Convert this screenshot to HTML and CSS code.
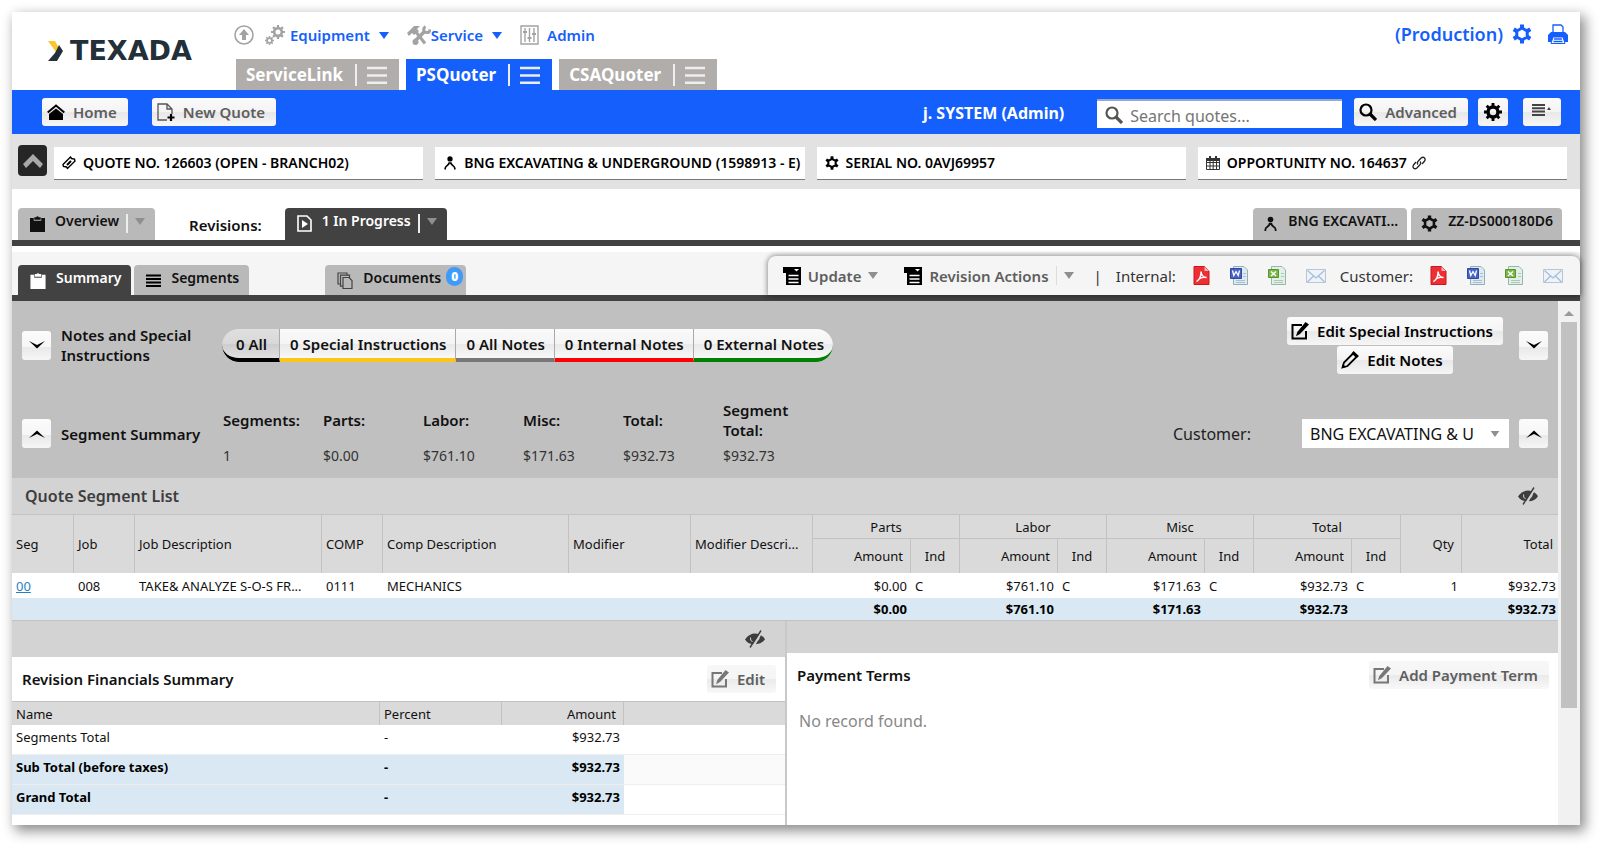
FILE: index.html
```
<!DOCTYPE html>
<html lang="en">
<head>
    <meta charset="UTF-8">
    <meta name="viewport" content="width=device-width, initial-scale=1.0">
    <title>Texada - PSQuoter</title>
    <link rel="stylesheet" href="styles.css">
</head>
<body>
    <!-- shared icons -->
    <svg class="sprite" aria-hidden="true">
        <symbol id="gear" viewBox="0 0 20 20"><path fill="none" stroke="currentColor" stroke-width="3" stroke-linejoin="round" d="M10 4l5.200 3v6L10 16l-5.200-3V7z"/><path stroke="currentColor" stroke-width="4" d="M10 .5v4M10 15.500v4M1.700 5.200l3.300 2M15 12.800l3.300 2M1.700 14.800l3.300-2M15 7.200l3.300-2"/></symbol>
        <symbol id="cog" viewBox="0 0 20 20"><circle cx="10" cy="10" r="5.500" fill="none" stroke="currentColor" stroke-width="3.800"/><path stroke="currentColor" stroke-width="3.200" d="M10 0v4M10 16v4M0 10h4M16 10h4M3 3l3 3M14 14l3 3M3 17l3-3M14 6l3-3"/></symbol>
        <symbol id="person" viewBox="0 0 16 16"><circle cx="8" cy="3.300" r="3" fill="currentColor"/><path d="M2.500 15.500V14C2.500 11 6.500 11 7 8h2c.5 3 4.500 3 4.500 6v1.500" fill="none" stroke="currentColor" stroke-width="1.900"/></symbol>
        <symbol id="clip" viewBox="0 0 16 18"><path fill="currentColor" d="M0 3h4v3h8V3h4v15H0z"/><path fill="currentColor" d="M4.600 2.200h2a1.500 1.500 0 0 1 2.800 0h2v2.800H4.600z"/></symbol>
        <symbol id="bars" viewBox="0 0 20 18"><path stroke="currentColor" stroke-width="2.600" d="M0 2h20M0 9.500h20M0 16.700h20"/></symbol>
        <symbol id="caret" viewBox="0 0 10 7"><path fill="currentColor" d="M0 0h10L5 7z"/></symbol>
        <symbol id="down" viewBox="0 0 16 10"><path fill="currentColor" d="M0 1l8 4 8-4-8 7.500z"/></symbol>
        <symbol id="up" viewBox="0 0 16 10"><path fill="currentColor" d="M0 9l8-4 8 4-8-7.500z"/></symbol>
        <symbol id="lens" viewBox="0 0 18 18"><circle cx="7" cy="7" r="5.500" fill="none" stroke="currentColor" stroke-width="2.200"/><path d="M11 11l6 6" stroke="currentColor" stroke-width="3.200"/></symbol>
        <symbol id="edit" viewBox="0 0 18 18"><path d="M11 3H1.500v13.500H15V9" fill="none" stroke="currentColor" stroke-width="2"/><path fill="currentColor" d="M14.500 0L18 2.500 9 12l-4 2.200L6.300 10z"/></symbol>
        <symbol id="list" viewBox="0 0 18 18"><path fill="currentColor" d="M0 0h18v18H3V6H0z"/><path stroke="#fff" stroke-width="1.600" d="M5.500 8.500h10M5.500 12h10M5.500 15.500h10"/><path fill="#fff" d="M11 2h5l-2.500 2.500z"/></symbol>
        <symbol id="eye" viewBox="0 0 20 18"><path fill="currentColor" d="M0 9.500C4 3.500 10 2.500 14 4.500L8 14C4.500 14 2 12.500 0 9.500zM16 5.200c1.700 1 3 2.300 4 4-2 3.300-5.500 4.900-9.200 5z"/><path stroke="#d3d3d3" d="M5.500 7.500a4.500 4.500 0 0 0 2 4.500M13 10.500a4 4 0 0 0 1-3" fill="none"/><path stroke="currentColor" stroke-width="1.400" d="M16 .5L5 17.500"/></symbol>
        <symbol id="pdf" viewBox="0 0 17 19"><path fill="#ee2e33" stroke="#c9181e" d="M1 .5h10.500L16 5v13.500H1z"/><path fill="#f9b3b3" d="M11.500.5V5H16z"/><path fill="none" stroke="#fff" stroke-width="1.500" d="M3.500 15.500c3-1.500 5-6 4.500-10 .5 4 2.500 6 5.500 6-3-.6-6.500.4-8.500 2.200"/></symbol>
        <symbol id="word" viewBox="0 0 18 19"><path fill="#dfeaf0" stroke="#8fb0bb" d="M3.500.500H14L17.500 4v14.500h-14z"/><path stroke="#a9c1ca" d="M6 14.500h9M6 16.500h9M13 7.500h3M13 10.500h3"/><path fill="#4762c4" stroke="#3049a5" d="M.5 2.500h11v10H.5z"/><path fill="none" stroke="#fff" stroke-width="1.300" d="M2.500 4.500l1.300 5L6 5.500l2.200 4 1.300-5"/></symbol>
        <symbol id="xls" viewBox="0 0 18 19"><path fill="#e4efe6" stroke="#8fb9a8" d="M3.500.500H14L17.500 4v14.500h-14z"/><path stroke="#a9cab8" d="M6 14.500h9M6 16.500h9M13 7.500h3M13 10.500h3"/><path fill="#7ab648" stroke="#57952b" d="M.5 3.500h10v8H.5z"/><path stroke="#fff" stroke-width="1.400" d="M3 5.500l5 4.500M8 5.500L3 10"/></symbol>
        <symbol id="mail" viewBox="0 0 20 14"><path fill="#edf3fa" stroke="#bcc4ce" d="M.5.500h19v13H.5z"/><path fill="none" stroke="#a9bdd6" stroke-width="1.300" d="M1.500 1.500L10 9l8.500-7.500M1.500 13l6-6M18.500 13l-6-6"/></symbol>
    </svg>

    <div class="app">
        <header class="header">
            <div class="logo">
                <svg width="15" height="20" viewBox="0 0 15 20"><path fill="#fdc52c" d="M0 0h7l4 7-3 4z"/><path fill="#232f39" d="M11 4l4 6-6 10H0l7-8z"/></svg>
                <span>TEXADA</span>
            </div>
            <div class="header-main">
                <nav class="menu">
                    <svg class="gray" width="20" height="20" viewBox="0 0 20 20"><circle cx="10" cy="10" r="9" fill="none" stroke="currentColor" stroke-width="1.600"/><path fill="currentColor" d="M10 4l5 6h-3v5H8v-5H5z"/></svg>
                    <svg class="gray gears" width="20" height="20" viewBox="0 0 20 20"><use href="#cog" x="6" y="0" width="14" height="14"/><use href="#cog" x="0" y="11" width="9" height="9"/></svg>
                    <a href="#">Equipment</a>
                    <svg class="caret" width="10" height="7"><use href="#caret"/></svg>
                    <svg class="gray tools" width="24" height="20" viewBox="0 0 24 20"><path fill="currentColor" d="M0 8l7-7h6l-3 3 2 2-5 4-2-2-3 3z"/><path stroke="currentColor" stroke-width="3" d="M9 7l9 11.500"/><path stroke="currentColor" stroke-width="3.600" d="M17 7L7 17"/><circle cx="8.500" cy="17" r="3" fill="currentColor"/><path fill="none" stroke="currentColor" stroke-width="3" d="M18.500 1.500c-3 2-2 6 1 6 2 .3 3.200-.5 3.500-3"/></svg>
                    <a href="#">Service</a>
                    <svg class="caret" width="10" height="7"><use href="#caret"/></svg>
                    <svg class="gray sliders" width="19" height="20" viewBox="0 0 19 20"><path fill="none" stroke="currentColor" stroke-width="1.400" d="M1 1h17v18H1zM5 3v14M9.500 3v14M14 3v14"/><path stroke="currentColor" stroke-width="2" d="M3 7h4M7.500 13h4M12 9h4"/></svg>
                    <a href="#">Admin</a>
                </nav>
                <div class="app-tabs">
                    <a class="app-tab" href="#">ServiceLink <i></i><svg width="20" height="18"><use href="#bars"/></svg></a>
                    <a class="app-tab active" href="#">PSQuoter <i></i><svg width="20" height="18"><use href="#bars"/></svg></a>
                    <a class="app-tab" href="#">CSAQuoter <i></i><svg width="20" height="18"><use href="#bars"/></svg></a>
                </div>
            </div>
            <div class="env">
                <span>(Production)</span>
                <svg width="20" height="20"><use href="#gear"/></svg>
                <svg class="printer" width="20" height="20" viewBox="0 0 20 20"><path fill="#fff" stroke="currentColor" stroke-width="1.300" d="M5 9V1h8l2 2v6z"/><path fill="currentColor" d="M3 8h14l3 3v7H0v-7z"/><path fill="#fff" stroke="currentColor" d="M5 13h10l2 6.500H3z"/><path stroke="currentColor" stroke-width="1.300" d="M6 15h8M5.500 17.500h9"/></svg>
            </div>
        </header>

        <div class="bluebar">
            <button class="btn"><svg width="18" height="16" viewBox="0 0 18 16"><path fill="#000" d="M9 4.500l7 5.500v6H2v-6z"/><path fill="none" stroke="#000" stroke-width="2" d="M.7 8.500L9 1.500l8.300 7"/></svg>Home</button>
            <button class="btn new-quote"><svg width="18" height="19" viewBox="0 0 18 19"><path fill="none" stroke="#555" stroke-width="1.300" d="M15 11V6l-5-5H1v16h9M10 1v5h5"/><path stroke="#000" stroke-width="2.200" d="M14 11v7M10.500 14.500h7"/></svg>New Quote</button>
            <span class="user">j. SYSTEM (Admin)</span>
            <div class="search">
                <svg width="18" height="18"><use href="#lens"/></svg>
                <input type="text" placeholder="Search quotes..." aria-label="Search quotes">
            </div>
            <button class="btn advanced"><svg width="18" height="18"><use href="#lens"/></svg>Advanced</button>
            <button class="btn icon-btn" aria-label="Settings"><svg width="18" height="18"><use href="#cog"/></svg></button>
            <button class="btn menu-btn" aria-label="Menu"><svg width="20" height="12" viewBox="0 0 20 12"><path stroke="#444" stroke-width="2" d="M0 1h13M0 4.300h13M0 7.600h13M0 11h13"/><path fill="#444" d="M15 6h4l-2-3z"/></svg></button>
        </div>

        <div class="infobar">
            <button class="collapse" aria-label="Collapse"><svg width="20" height="14" viewBox="0 0 20 14"><path fill="#a9a9a9" d="M10 0l10 10-3 4-7-7-7 7-3-4z"/></svg></button>
            <div class="info"><svg width="14" height="14" viewBox="0 0 14 14"><path fill="none" stroke="#000" stroke-width="1.400" d="M1 8.500L8.500 1l1 1.500 3 .5.500 2L5.500 12.500l-1-1.500-3-.5z"/><path stroke="#000" stroke-width="2" d="M5 9l4-4"/></svg>QUOTE NO. 126603 (OPEN - BRANCH02)</div>
            <div class="info"><svg width="14" height="14"><use href="#person"/></svg>BNG EXCAVATING &amp; UNDERGROUND (1598913 - E)</div>
            <div class="info"><svg width="14" height="14"><use href="#gear"/></svg>SERIAL NO. 0AVJ69957</div>
            <div class="info"><svg width="14" height="14" viewBox="0 0 14 14"><path stroke="#333" fill="none" d="M.5 2.500h13v11H.5zM.5 6.500h13M.5 10h13M4 5v8.500M7.200 5v8.500M10.500 5v8.500"/><path fill="#333" d="M0 2h14v3H0zM3 0h2v2H3zM9 0h2v2H9z"/></svg>OPPORTUNITY NO. 164637<svg class="link" width="14" height="14" viewBox="0 0 14 14"><path fill="none" stroke="#222" stroke-width="1.300" d="M6 8.500C5 7.500 5.200 6 6.300 5l2.800-3c2.500-2 5 .5 3.500 3L10 8M8 5.500c1 1 .8 2.500-.3 3.500l-2.800 3C2.400 14 0 11.500 1.500 9L4 6"/></svg></div>
        </div>

        <div class="tabbar">
            <a class="tab overview" href="#"><svg width="15" height="17"><use href="#clip"/></svg>Overview<i></i><svg class="drop" width="10" height="7"><use href="#caret"/></svg></a>
            <span class="revisions">Revisions:</span>
            <a class="tab active" href="#"><svg width="15" height="17" viewBox="0 0 15 17"><path fill="none" stroke="#fff" stroke-width="1.600" d="M1 1h9l4 4v11H1z"/><path fill="#fff" d="M5 5v8l6-4z"/></svg>1 In Progress<i></i><svg class="drop" width="10" height="7"><use href="#caret"/></svg></a>
            <div class="right-tabs">
                <a class="tab" href="#"><svg width="15" height="16"><use href="#person"/></svg>BNG EXCAVATI...</a>
                <a class="tab" href="#"><svg width="17" height="17"><use href="#gear"/></svg>ZZ-DS000180D6</a>
            </div>
        </div>

        <div class="tabbar sub">
            <a class="tab active" href="#"><svg width="16" height="17"><use href="#clip"/></svg>Summary</a>
            <a class="tab segments" href="#"><svg width="15" height="13" viewBox="0 0 15 13"><path stroke="#000" stroke-width="2.200" d="M0 1.500h15M0 5h15M0 8.500h15M0 12h15"/></svg>Segments</a>
            <a class="tab documents" href="#"><svg width="16" height="17" viewBox="0 0 16 17"><g fill="#b9b9b9" stroke="#444" stroke-width="1.200"><path d="M1 1h9v11H1z"/><path d="M3.500 3.200h9v11h-9z"/><path d="M6 5.500h6l3 3v8H6z"/></g></svg>Documents<b class="badge">0</b></a>
            <div class="toolbar">
                <button class="tool"><svg width="18" height="18"><use href="#list"/></svg>Update<svg class="drop" width="10" height="7"><use href="#caret"/></svg></button>
                <button class="tool wide"><svg width="18" height="18"><use href="#list"/></svg>Revision Actions<i></i><svg class="drop" width="10" height="7"><use href="#caret"/></svg></button>
                <span class="bar">|</span>
                <div class="exports">
                    <span>Internal:</span>
                    <button aria-label="PDF"><svg width="17" height="19"><use href="#pdf"/></svg></button>
                    <button aria-label="Word"><svg width="18" height="19"><use href="#word"/></svg></button>
                    <button aria-label="Excel"><svg width="18" height="19"><use href="#xls"/></svg></button>
                    <button aria-label="Mail"><svg width="20" height="14"><use href="#mail"/></svg></button>
                </div>
                <div class="exports">
                    <span>Customer:</span>
                    <button aria-label="PDF"><svg width="17" height="19"><use href="#pdf"/></svg></button>
                    <button aria-label="Word"><svg width="18" height="19"><use href="#word"/></svg></button>
                    <button aria-label="Excel"><svg width="18" height="19"><use href="#xls"/></svg></button>
                    <button aria-label="Mail"><svg width="20" height="14"><use href="#mail"/></svg></button>
                </div>
            </div>
        </div>

        <div class="body">
            <main class="content">
                <section class="row notes">
                    <button class="toggle" aria-label="Expand"><svg width="16" height="10"><use href="#down"/></svg></button>
                    <h2>Notes and Special Instructions</h2>
                    <div class="pills">
                        <button class="pill all">0 All</button>
                        <button class="pill special">0 Special Instructions</button>
                        <button class="pill allnotes">0 All Notes</button>
                        <button class="pill internal">0 Internal Notes</button>
                        <button class="pill external">0 External Notes</button>
                    </div>
                    <div class="edit-buttons">
                        <button class="btn dark"><svg width="18" height="18"><use href="#edit"/></svg>Edit Special Instructions</button>
                        <button class="btn dark"><svg width="18" height="18" viewBox="0 0 18 18"><path fill="none" stroke="#000" stroke-width="1.800" d="M1.500 16.500l1.500-5L12.500 2l3.500 3.500L6.500 15z"/><path fill="#000" d="M12.500 0L18 5l-2.500 2-5-4.500zM1 17l1-4 3 3z"/></svg>Edit Notes</button>
                    </div>
                    <button class="toggle" aria-label="Expand"><svg width="16" height="10"><use href="#down"/></svg></button>
                </section>

                <section class="row summary">
                    <button class="toggle" aria-label="Collapse"><svg width="16" height="10"><use href="#up"/></svg></button>
                    <h2>Segment Summary</h2>
                    <dl class="totals">
                        <div><dt>Segments:</dt><dd>1</dd></div>
                        <div><dt>Parts:</dt><dd>$0.00</dd></div>
                        <div><dt>Labor:</dt><dd>$761.10</dd></div>
                        <div><dt>Misc:</dt><dd>$171.63</dd></div>
                        <div><dt>Total:</dt><dd>$932.73</dd></div>
                        <div><dt>Segment Total:</dt><dd>$932.73</dd></div>
                    </dl>
                    <label class="customer-label" for="customer">Customer:</label>
                    <div class="select">
                        <select id="customer"><option>BNG EXCAVATING &amp; U</option></select>
                        <svg class="drop" width="10" height="6"><use href="#caret"/></svg>
                    </div>
                    <button class="toggle" aria-label="Collapse"><svg width="16" height="10"><use href="#up"/></svg></button>
                </section>

                <div class="list-title"><h2>Quote Segment List</h2><svg width="20" height="18"><use href="#eye"/></svg></div>
                <table class="grid">
                    <colgroup>
                        <col class="w62"><col class="w61"><col><col class="w61"><col class="w186"><col class="w122"><col class="w122">
                        <col class="w98"><col class="w49"><col class="w98"><col class="w49"><col class="w98"><col class="w49"><col class="w98"><col class="w49">
                        <col class="w61"><col class="w96">
                    </colgroup>
                    <thead>
                        <tr>
                            <th rowspan="2">Seg</th><th rowspan="2">Job</th><th rowspan="2">Job Description</th><th rowspan="2">COMP</th><th rowspan="2">Comp Description</th><th rowspan="2">Modifier</th><th rowspan="2">Modifier Descri...</th>
                            <th class="group" colspan="2">Parts</th><th class="group" colspan="2">Labor</th><th class="group" colspan="2">Misc</th><th class="group" colspan="2">Total</th>
                            <th class="num" rowspan="2">Qty</th><th class="num last" rowspan="2">Total</th>
                        </tr>
                        <tr>
                            <th class="num">Amount</th><th class="ind">Ind</th><th class="num">Amount</th><th class="ind">Ind</th><th class="num">Amount</th><th class="ind">Ind</th><th class="num">Amount</th><th class="ind">Ind</th>
                        </tr>
                    </thead>
                    <tbody>
                        <tr>
                            <td><a href="#">00</a></td><td>008</td><td>TAKE&amp; ANALYZE S-O-S FR...</td><td>0111</td><td>MECHANICS</td><td></td><td></td>
                            <td class="num">$0.00</td><td>C</td><td class="num">$761.10</td><td>C</td><td class="num">$171.63</td><td>C</td><td class="num">$932.73</td><td>C</td>
                            <td class="num">1</td><td class="num last">$932.73</td>
                        </tr>
                    </tbody>
                    <tfoot>
                        <tr>
                            <td colspan="7"></td>
                            <td class="num">$0.00</td><td></td><td class="num">$761.10</td><td></td><td class="num">$171.63</td><td></td><td class="num">$932.73</td><td></td>
                            <td></td><td class="num last">$932.73</td>
                        </tr>
                    </tfoot>
                </table>

                <div class="panels">
                    <section class="panel">
                        <div class="panel-top"><svg width="20" height="18"><use href="#eye"/></svg></div>
                        <div class="panel-head">
                            <h3>Revision Financials Summary</h3>
                            <button class="btn flat"><svg width="18" height="18"><use href="#edit"/></svg>Edit</button>
                        </div>
                        <table class="grid financials">
                            <colgroup><col><col class="w122"><col class="w122"><col class="w161"></colgroup>
                            <thead><tr><th>Name</th><th>Percent</th><th class="num">Amount</th><th class="last"></th></tr></thead>
                            <tbody>
                                <tr><td>Segments Total</td><td>-</td><td class="num">$932.73</td><td></td></tr>
                                <tr class="total"><td>Sub Total (before taxes)</td><td>-</td><td class="num">$932.73</td><td class="odd"></td></tr>
                                <tr class="total"><td>Grand Total</td><td>-</td><td class="num">$932.73</td><td></td></tr>
                            </tbody>
                        </table>
                    </section>
                    <section class="panel payment">
                        <div class="panel-top"></div>
                        <div class="panel-head">
                            <h3>Payment Terms</h3>
                            <button class="btn flat"><svg width="18" height="18"><use href="#edit"/></svg>Add Payment Term</button>
                        </div>
                        <p>No record found.</p>
                    </section>
                </div>
            </main>
            <div class="scrollbar">
                <svg width="10" height="5" viewBox="0 0 10 5"><path fill="#9a9a9a" d="M5 0l5 5H0z"/></svg>
                <div class="thumb"></div>
            </div>
        </div>
    </div>
</body>
</html>
```
FILE: styles.css
```
* {
    box-sizing: border-box;
}
body {
    margin: 0;
    padding: 12px 20px 20px 12px;
    background: #fff;
    font-family: "Noto Sans", "Open Sans", sans-serif;
    font-size: 14px;
    line-height: 20px;
    color: #111;
}
h2, h3, p, dl, dd {
    margin: 0;
}
h2, h3, dt {
    font-size: 15px;
    font-weight: 600;
}
a {
    color: inherit;
    text-decoration: none;
}
button, input, select {
    font: inherit;
    color: inherit;
}
button {
    border: none;
    background: none;
    padding: 0;
    cursor: pointer;
}
svg {
    flex: none;
}
.sprite {
    position: absolute;
    width: 0;
    height: 0;
}
.app {
    display: flex;
    flex-direction: column;
    min-height: calc(100vh - 32px);
    background: #fff;
    box-shadow: 4px 5px 12px 1px rgba(0, 0, 0, 0.45);
}

/* header */
.header {
    display: flex;
    height: 78px;
    padding-right: 12px;
}
.logo {
    display: flex;
    align-items: center;
    gap: 7px;
    width: 224px;
    padding-left: 36px;
    font-family: "DejaVu Sans", sans-serif;
    font-size: 27px;
    font-weight: bold;
    color: #232f39;
}
.header-main {
    flex: 1;
    display: flex;
    flex-direction: column;
    justify-content: space-between;
}
.menu {
    display: flex;
    align-items: center;
    padding-top: 12px;
    font-size: 15px;
    font-weight: 600;
    line-height: 22px;
    color: #155ffd;
}
.menu svg {
    margin-left: 9px;
}
.menu svg:first-child {
    margin-left: -2px;
}
.gray {
    color: #a3a3a3;
}
.menu .gears {
    margin: 0 5px 0 11px;
}
.menu .tools {
    margin-left: 18px;
}
.menu .sliders {
    margin: 0 8px 0 18px;
}
.app-tabs {
    display: flex;
    gap: 7px;
}
.app-tab {
    display: flex;
    align-items: center;
    height: 31px;
    padding: 0 12px 0 10px;
    background: #b1adaa;
    color: #fff;
    font-size: 17px;
    font-weight: 700;
}
.app-tab i {
    width: 2px;
    height: 22px;
    margin: 0 10px 0 12px;
    background: #eee;
}
.app-tab svg {
    color: #eee;
}
.app-tab.active {
    background: #155ffd;
}
.env {
    display: flex;
    align-items: center;
    gap: 9px;
    height: 44px;
    font-size: 18px;
    font-weight: 600;
    color: #155ffd;
}
.printer {
    margin-left: 7px;
}

/* blue bar */
.bluebar {
    display: flex;
    align-items: center;
    height: 44px;
    padding: 0 19px 0 30px;
    background: #155ffd;
}
.btn {
    display: flex;
    align-items: center;
    gap: 8px;
    height: 28px;
    padding: 0 11px 0 5px;
    border-radius: 3px;
    background: linear-gradient(#fbfbfb, #f4f4f4 50%, #e8e8e8 52%, #f6f6f6);
    font-size: 15px;
    font-weight: 600;
    color: #5e5e5e;
    white-space: nowrap;
}
.new-quote {
    margin-left: 24px;
}
.user {
    margin-left: auto;
    padding-top: 2px;
    font-size: 16px;
    font-weight: 700;
    color: #fff;
}
.search {
    display: flex;
    align-items: center;
    width: 245px;
    height: 29px;
    margin: 3px 12px 0 33px;
    padding-left: 8px;
    background: #fff;
    border-top: 2px solid #9aa7cc;
    color: #555;
}
.search input {
    flex: 1;
    min-width: 0;
    padding: 3px 0 0 7px;
    border: none;
    outline: none;
    background: none;
    font-size: 16px;
}
.search input::placeholder {
    color: #757575;
    opacity: 1;
}
.advanced svg, .icon-btn svg {
    color: #000;
}
.icon-btn {
    margin: 0 15px 0 10px;
    padding: 0 6px;
}
.menu-btn {
    padding: 0 9px 4px;
}

/* quote info */
.infobar {
    display: flex;
    align-items: center;
    gap: 12px;
    height: 55px;
    padding: 0 13px 0 6px;
    background: #e2e2e2;
}
.collapse {
    display: flex;
    align-items: center;
    justify-content: center;
    width: 29px;
    height: 31px;
    margin: 0 -5px 2px 0;
    border-radius: 4px;
    background: #262626;
}
.info {
    flex: 1;
    display: flex;
    align-items: center;
    gap: 7px;
    height: 33px;
    margin-top: 3px;
    padding-left: 8px;
    background: #fff;
    border-bottom: 1px solid #777;
    font-size: 14px;
    font-weight: 600;
    color: #000;
    white-space: nowrap;
}
.info .link {
    margin-left: -2px;
}

/* tabs */
.tabbar {
    display: flex;
    align-items: flex-end;
    height: 57px;
    padding: 0 18px 0 6px;
    border-bottom: 6px solid #424242;
}
.tab {
    display: flex;
    align-items: center;
    height: 32px;
    padding: 0 10px 6px 12px;
    border-radius: 4px 4px 0 0;
    background: #b9b9b9;
    font-size: 14px;
    font-weight: 600;
    color: #111;
}
.tab svg:first-child {
    margin: 5px 10px 0 0;
}
.tab i, .tool i {
    width: 2px;
    height: 19px;
    margin: 4px 7px 0;
    background: #eee;
}
.tab.active {
    background: #424242;
    color: #fff;
}
.drop {
    color: #8f8f8f;
}
.revisions {
    margin: 0 23px 5px 34px;
    font-size: 15px;
    font-weight: 600;
}
.right-tabs {
    display: flex;
    gap: 4px;
    margin-left: auto;
}
.right-tabs .tab {
    padding-left: 10px;
    padding-right: 9px;
}
.tabbar.sub {
    height: 49px;
    margin-top: 6px;
    padding-right: 0;
    background: #f5f5f5;
}
.sub .tab {
    height: 30px;
    padding-bottom: 4px;
}
.segments {
    margin-left: 3px;
}
.sub .documents {
    margin-left: 76px;
    padding-right: 3px;
}
.badge {
    width: 17px;
    height: 19px;
    margin: -4px 0 0 5px;
    border-radius: 9px;
    background: #3f9bfa;
    color: #fff;
    font-size: 12px;
    text-align: center;
}
.toolbar {
    display: flex;
    align-items: center;
    height: 39px;
    margin-left: auto;
    padding: 0 17px 0 15px;
    border-radius: 8px 8px 0 0;
    background: #f5f5f5;
    box-shadow: 0 0 5px 1px rgba(0, 0, 0, 0.4);
    font-size: 15px;
    color: #333;
}
.tool {
    display: flex;
    align-items: center;
    gap: 7px;
    margin-right: 26px;
    font-weight: 600;
    color: #5e5e5e;
}
.tool svg:first-child {
    color: #000;
}
.tool i {
    width: 1px;
    margin: 0;
    background: #ddd;
}
.tool.wide {
    margin-right: 20px;
}
.exports {
    display: flex;
    align-items: center;
    gap: 20px;
    margin-left: 14px;
}
.exports span {
    margin-right: -3px;
}
.exports button {
    display: flex;
}

/* content */
.body {
    flex: 1;
    display: flex;
}
.content {
    flex: 1;
    display: flex;
    flex-direction: column;
    min-width: 0;
    background: #c0c0c0;
}
.row {
    display: flex;
    align-items: center;
    padding: 0 10px;
}
.notes {
    height: 88px;
}
.summary {
    height: 89px;
}
.row h2 {
    width: 151px;
    margin: 0 0 0 10px;
}
.toggle {
    display: flex;
    align-items: center;
    justify-content: center;
    width: 29px;
    height: 29px;
    border-radius: 3px;
    background: linear-gradient(#fbfbfb, #f6f6f6 55%, #e9e9e9 57%, #f6f6f6);
    color: #000;
}
.pills {
    display: flex;
    margin: 0 auto 0 10px;
    border-radius: 17px;
    overflow: hidden;
}
.pill {
    height: 33px;
    padding: 2px 9px 0 10px;
    border-bottom: 4px solid;
    border-right: 1px solid #aaa;
    background: linear-gradient(#fafafa, #f4f4f4 50%, #e9e9e9 52%, #f8f8f8);
    font-size: 15px;
    font-weight: 600;
}
.all {
    padding-left: 14px;
    padding-right: 12px;
    border-bottom-color: #000;
    border-radius: 0 0 0 17px;
    background: linear-gradient(#e0e0e0, #d8d8d8 50%, #cdcdcd 52%, #e0e0e0);
}
.special {
    border-bottom-color: #fdc518;
}
.allnotes {
    border-bottom-color: #777;
}
.internal {
    border-bottom-color: #f00;
}
.external {
    border-right: none;
    border-bottom-color: #008000;
    border-radius: 0 0 17px 0;
}
.edit-buttons {
    display: flex;
    flex-direction: column;
    align-items: center;
    gap: 1px;
    margin-right: 16px;
}
.dark {
    padding: 0 10px 0 4px;
    color: #000;
}
.totals {
    display: flex;
    height: 72px;
    margin: 0 auto 0 11px;
}
.totals div {
    display: flex;
    flex-direction: column;
    width: 100px;
}
.totals dt {
    display: flex;
    align-items: center;
    flex: 1;
    width: 78px;
}
.totals dd {
    padding: 3px 0 4px;
    color: #333;
}
.customer-label {
    width: 129px;
    font-size: 16px;
    color: #222;
}
.select {
    display: flex;
    align-items: center;
    width: 207px;
    height: 29px;
    margin-right: 10px;
    padding-right: 9px;
    background: #fff;
}
.select select {
    flex: 1;
    min-width: 0;
    height: 29px;
    padding: 0 0 0 8px;
    border: none;
    appearance: none;
    background: none;
    font-size: 16px;
}
.list-title {
    display: flex;
    align-items: center;
    justify-content: space-between;
    height: 37px;
    padding: 0 20px 0 13px;
    background: #d3d3d3;
    border-bottom: 1px solid #c2c2c2;
    color: #3d3d3d;
}
.list-title h2 {
    font-size: 16px;
}

/* tables */
.grid {
    width: 100%;
    table-layout: fixed;
    border-collapse: separate;
    border-spacing: 0;
    background: #fff;
    font-size: 13px;
    line-height: 20px;
}
.grid th, .grid td {
    padding: 0 4px;
    text-align: left;
    white-space: nowrap;
    overflow: hidden;
    text-overflow: ellipsis;
}
.grid th {
    height: 34px;
    border-right: 1px solid #c2c2c2;
    background: #dadada;
    font-weight: 400;
}
.grid th.group {
    height: 24px;
    border-bottom: 1px solid #c2c2c2;
    text-align: center;
}
.grid th.ind {
    text-align: center;
}
.grid th.num {
    padding-right: 7px;
    text-align: right;
}
.grid th.last {
    padding-right: 5px;
    border-right: none;
}
.grid td {
    height: 25px;
}
.grid td.num {
    padding-right: 4px;
    text-align: right;
}
.grid td.last {
    padding-right: 2px;
}
.grid td a {
    color: #2a7fc0;
    text-decoration: underline;
}
.grid tfoot td {
    height: 22px;
    background: #d9e8f3;
    font-weight: 700;
    color: #000;
}
.w49 { width: 49px; }
.w61 { width: 61px; }
.w62 { width: 62px; }
.w96 { width: 96px; }
.w98 { width: 98px; }
.w122 { width: 122px; }
.w161 { width: 161px; }
.w186 { width: 186px; }

/* bottom panels */
.panels {
    flex: 1;
    display: grid;
    grid-template-columns: 1fr 1fr;
    border-top: 1px solid #c2c2c2;
}
.panel {
    background: #fff;
}
.panel-top {
    display: flex;
    align-items: center;
    justify-content: flex-end;
    height: 36px;
    padding-right: 20px;
    background: #d3d3d3;
    color: #3d3d3d;
}
.panel-head {
    display: flex;
    align-items: center;
    justify-content: space-between;
    height: 44px;
    padding: 0 9px 0 10px;
}
.flat {
    background: linear-gradient(#f7f7f7, #f5f5f5 50%, #eaeaea 52%, #f8f8f8);
    padding: 0 11px 0 4px;
}
.flat svg {
    color: #777;
}
.financials th {
    height: 24px;
    border-top: 1px solid #c2c2c2;
}
.financials td {
    height: 30px;
    padding-bottom: 5px;
    border-bottom: 1px solid #eee;
}
.financials .total td {
    background: #d9e8f3;
    font-weight: 700;
    color: #000;
}
.financials .total td:last-child {
    background: #fff;
}
.financials .total td.odd {
    background: #fafafa;
}
.payment {
    border-left: 2px solid #c8c8c8;
}
.payment .panel-top {
    height: 32px;
}
.payment p {
    padding: 14px 12px;
    font-size: 16px;
    color: #888;
}
.scrollbar {
    display: flex;
    flex-direction: column;
    align-items: center;
    width: 22px;
    padding-top: 10px;
    background: #f1f1f1;
}
.thumb {
    width: 16px;
    height: 75%;
    margin-top: 6px;
    background: #c1c1c1;
}
```
